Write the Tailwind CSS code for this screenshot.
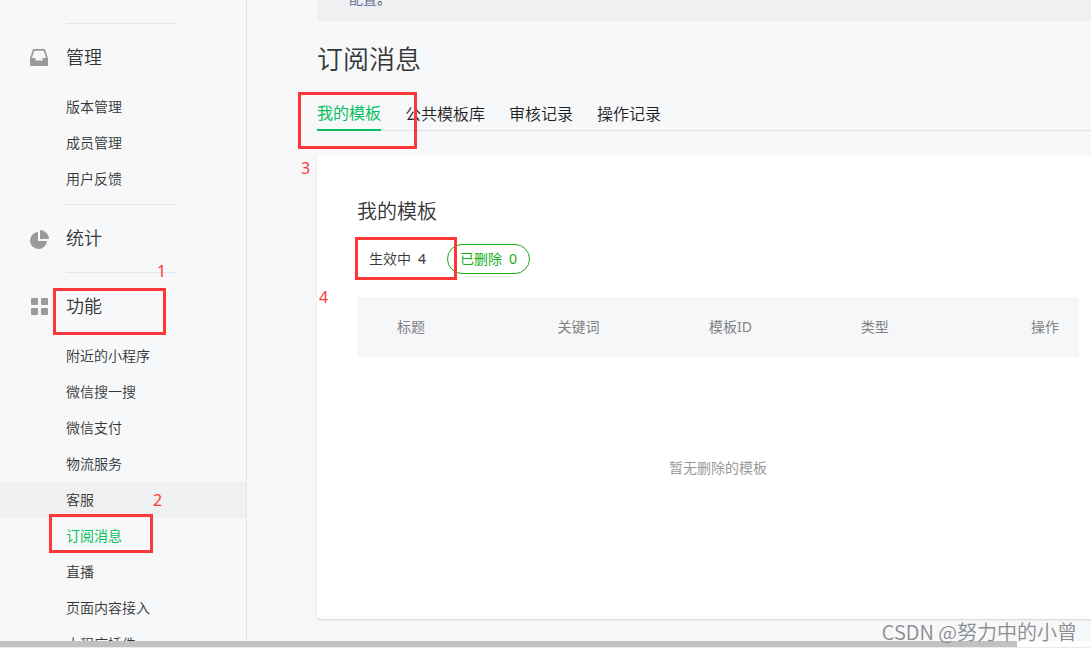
<!DOCTYPE html>
<html lang="zh-CN">
<head>
<meta charset="utf-8">
<meta name="viewport" content="width=device-width, initial-scale=1">
<title>订阅消息</title>
<script src="https://cdn.jsdelivr.net/npm/@tailwindcss/browser@4"></script>
</head>
<body class="relative flex h-screen flex-col overflow-hidden bg-white font-['Noto_Sans','Noto_Sans_CJK_SC',sans-serif] text-sm font-[350] text-[#353535]">
  <div class="flex min-h-0 flex-1 overflow-hidden bg-[#f7f8fa]">
    <nav class="w-[247px] shrink-0 overflow-hidden border-r border-[#e4e6eb] pt-[23px]" aria-label="主菜单">
      <section class="pb-[7px]">
        <div class="ml-[66px] w-[110px] border-t border-[#e4e6e9]"></div>
        <h2 class="flex h-[65px] items-center pl-[29px] text-lg font-[350]">
          <svg class="mt-0.5 mr-[17px] h-5 w-5 shrink-0" viewBox="0 0 20 20" fill="#9a9a9a" aria-hidden="true"><path fill-rule="evenodd" d="M4 1h12l3 9.500V17a1 1 0 0 1-1 1H2a1 1 0 0 1-1-1V10.500zM5.300 2.700 2.900 10H6.500v2.500h7V10h3.600L14.700 2.700z"/></svg>
          管理
        </h2>
        <ul class="leading-9">
          <li><a href="#" class="block pl-[66px]">版本管理</a></li>
          <li><a href="#" class="block pl-[66px]">成员管理</a></li>
          <li><a href="#" class="block pl-[66px]">用户反馈</a></li>
        </ul>
      </section>
      <section class="pb-0.5">
        <div class="ml-[66px] w-[110px] border-t border-[#e4e6e9]"></div>
        <h2 class="flex h-[65px] items-center pl-[29px] text-lg font-[350]">
          <svg class="mt-0.5 mr-[17px] h-5 w-5 shrink-0" viewBox="0 0 20 20" fill="#9a9a9a" aria-hidden="true"><path d="M9 3v9h9a8.500 8.500 0 1 1-9-9z"/><path d="M11 1a9 9 0 0 1 9 9h-9z"/></svg>
          统计
        </h2>
      </section>
      <section>
        <div class="ml-[66px] w-[110px] border-t border-[#e4e6e9]"></div>
        <h2 class="flex h-[65px] items-center pl-[29px] text-lg font-[350]">
          <svg class="mt-0.5 mr-[17px] h-5 w-5 shrink-0" viewBox="0 0 20 20" fill="#9a9a9a" aria-hidden="true"><rect x="2" y="1" width="7" height="7" rx="1"/><rect x="12" y="1" width="7" height="7" rx="1"/><rect x="2" y="11" width="7" height="7" rx="1"/><rect x="12" y="11" width="7" height="7" rx="1"/></svg>
          功能
        </h2>
        <ul class="leading-9">
          <li><a href="#" class="block pl-[66px]">附近的小程序</a></li>
          <li><a href="#" class="block pl-[66px]">微信搜一搜</a></li>
          <li><a href="#" class="block pl-[66px]">微信支付</a></li>
          <li><a href="#" class="block pl-[66px]">物流服务</a></li>
          <li><a href="#" class="block bg-[#eff0f2] pl-[66px]">客服</a></li>
          <li><a href="#" class="block pl-[66px] font-normal text-[#07c160]" aria-current="page">订阅消息</a></li>
          <li><a href="#" class="block pl-[66px]">直播</a></li>
          <li><a href="#" class="block pl-[66px]">页面内容接入</a></li>
          <li><a href="#" class="block pl-[66px]">小程序插件</a></li>
        </ul>
      </section>
    </nav>

    <main class="min-w-0 flex-1 overflow-hidden pl-[70px]">
      <div class="-mt-3 -mr-7">
        <p class="rounded bg-[#eff0f2] px-8 pb-[11px] leading-[22px]"><a href="#" class="text-[#576b95]">配置</a>。</p>
        <h1 class="pt-5 text-[26px] leading-9 font-[350]">订阅消息</h1>
        <div class="mt-5 flex gap-6 border-b border-[#e0e1e4] text-base leading-8 text-[#1f1f1f]" role="tablist">
          <button type="button" role="tab" aria-selected="true" class="-mb-px border-b-2 border-[#07c160] font-normal text-[#07c160]">我的模板</button>
          <button type="button" role="tab" aria-selected="false">公共模板库</button>
          <button type="button" role="tab" aria-selected="false">审核记录</button>
          <button type="button" role="tab" aria-selected="false">操作记录</button>
        </div>
        <section class="mt-6 rounded bg-white px-10 pt-10 pb-10 shadow-[0_1px_2px_rgba(0,0,0,0.15)]">
          <h2 class="text-xl leading-[34px] font-[350]">我的模板</h2>
          <div class="mt-[15px] flex gap-[9px]">
            <button type="button" class="flex h-[30px] items-center gap-[7px] rounded-full px-3"><span>生效中</span><span class="font-normal">4</span></button>
            <button type="button" class="flex h-[30px] items-center gap-[7px] rounded-full border border-[#1aad19] px-3 font-normal text-[#1aad19]"><span>已删除</span><span>0</span></button>
          </div>
          <table class="mt-[23px] w-full table-fixed">
            <thead class="bg-[#f6f7f9] text-left text-[#7f8183]">
              <tr class="h-[60px]">
                <th class="w-1/4 pl-10 font-normal">标题</th>
                <th class="w-[21%] px-5 font-normal">关键词</th>
                <th class="w-[21%] px-5 font-normal">模板ID</th>
                <th class="px-5 font-normal">类型</th>
                <th class="px-5 text-right font-normal">操作</th>
              </tr>
            </thead>
            <tbody>
              <tr class="h-[222px]"><td colspan="5" class="text-center font-normal text-[#9a9a9a]">暂无删除的模板</td></tr>
            </tbody>
          </table>
        </section>
      </div>
    </main>
  </div>

  <div class="h-[6px] shrink-0"><div class="h-full w-[93.2%] bg-[#c1c1c1]"></div></div>
  <div class="h-[3px] shrink-0 border-t border-[#ebebeb]"></div>

  <!-- Red walkthrough markers laid over the page -->
  <div class="pointer-events-none absolute inset-0 overflow-hidden text-base leading-5 font-normal text-[#fb3737]">
    <div class="absolute top-[288px] left-[53px] h-[47px] w-[113px] border-3 border-[#fb3737]"></div>
    <div class="absolute top-[514px] left-[49px] h-[39px] w-[104px] border-3 border-[#fb3737]"></div>
    <div class="absolute top-[92px] left-[298px] h-[57px] w-[119px] border-3 border-[#fb3737]"></div>
    <div class="absolute top-[237px] left-[355px] h-[43px] w-[102px] border-3 border-[#fb3737]"></div>
    <span class="absolute top-[261px] left-[157px]">1</span>
    <span class="absolute top-[490px] left-[153px]">2</span>
    <span class="absolute top-[158px] left-[301px]">3</span>
    <span class="absolute top-[287px] left-[319px]">4</span>
    <span class="absolute right-[14px] bottom-[4px] font-['Noto_Sans_CJK_SC',sans-serif] text-xl leading-7 font-[350] text-[#8b8d8f]">CSDN @努力中的小曾</span>
  </div>
</body>
</html>
